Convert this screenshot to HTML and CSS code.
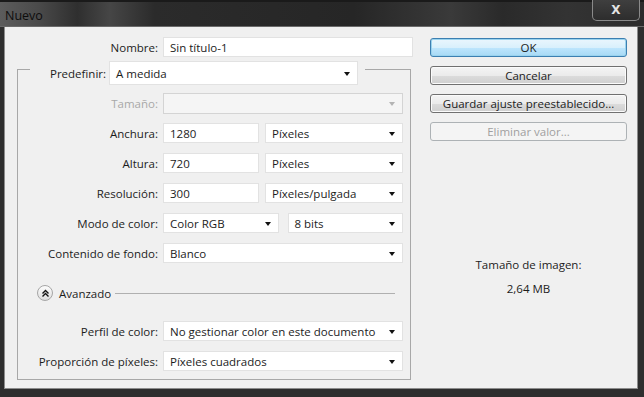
FILE: index.html
```html
<!DOCTYPE html>
<html lang="es">
<head>
  <meta charset="UTF-8" />
  <title>Nuevo</title>
  <link rel="stylesheet" href="styles.css">
</head>
<body>
  <div class="window">
    <div class="titlebar">
      <span class="title">Nuevo</span>
      <span class="close">X</span>
    </div>

    <div class="client">
      <div class="left">
        <div class="row name-row">
          <label>Nombre:</label>
          <div class="field">Sin título-1</div>
        </div>

        <div class="group">
          <div class="group-head">
            <label>Predefinir:</label>
            <div class="select big">A medida</div>
          </div>

          <div class="row">
            <label class="dim">Tamaño:</label>
            <div class="select disabled"></div>
          </div>
          <div class="row">
            <label>Anchura:</label>
            <div class="pair">
              <div class="field num">1280</div>
              <div class="select unit">Píxeles</div>
            </div>
          </div>
          <div class="row">
            <label>Altura:</label>
            <div class="pair">
              <div class="field num">720</div>
              <div class="select unit">Píxeles</div>
            </div>
          </div>
          <div class="row">
            <label>Resolución:</label>
            <div class="pair">
              <div class="field num">300</div>
              <div class="select unit">Píxeles/pulgada</div>
            </div>
          </div>
          <div class="row">
            <label>Modo de color:</label>
            <div class="pair wide">
              <div class="select">Color RGB</div>
              <div class="select">8 bits</div>
            </div>
          </div>
          <div class="row">
            <label>Contenido de fondo:</label>
            <div class="select">Blanco</div>
          </div>

          <!-- Avanzado -->
          <div class="advanced">
            <span class="toggle">
              <svg width="9" height="9" viewBox="0 0 9 9">
                <path d="M1.5 4.5 L4.5 1.5 L7.5 4.5 M1.5 7.5 L4.5 4.5 L7.5 7.5" fill="none" stroke="#111" stroke-width="1.4"/>
              </svg>
            </span>
            <span class="adv-label">Avanzado</span>
            <span class="adv-line"></span>
          </div>

          <div class="row">
            <label>Perfil de color:</label>
            <div class="select">No gestionar color en este documento</div>
          </div>
          <div class="row">
            <label>Proporción de píxeles:</label>
            <div class="select">Píxeles cuadrados</div>
          </div>
        </div>
      </div>

      <div class="right">
        <button class="btn default">OK</button>
        <button class="btn">Cancelar</button>
        <button class="btn">Guardar ajuste preestablecido...</button>
        <button class="btn" disabled>Eliminar valor...</button>

        <div class="info">
          <p>Tamaño de imagen:</p>
          <p>2,64 MB</p>
        </div>
      </div>
    </div>
  </div>
</body>
</html>
```

FILE: styles.css
```css
* {
  margin: 0;
  padding: 0;
  box-sizing: border-box;
}

body {
  width: 644px;
  height: 397px;
  background: #262626;
  font-family: "Open Sans", "Noto Sans", sans-serif;
  font-size: 11.5px;
  color: #1c1c1c;
  overflow: hidden;
}

.window {
  width: 644px;
  height: 397px;
  display: flex;
  flex-direction: column;
  border-top: 2px solid #1a1a1a;
  background: #2e2e2e;
}

/* Barra de titulo */
.titlebar {
  height: 25px;
  display: flex;
  justify-content: space-between;
  align-items: flex-start;
  background: linear-gradient(90deg, #5c5c5c 0%, #4a4a4a 6%, #2f2f2f 12%, #464646 17%, #2b2b2b 24%, #262626 55%, #3a3a3a 70%, #2a2a2a 78%, #333 88%, #2c2c2c 100%);
  border-bottom: 1px solid #6a6a6a;
}

.title {
  padding: 5px 0 0 5px;
  font-size: 12.5px;
  color: #0d0d0d;
}

.close {
  width: 48px;
  height: 21px;
  margin: -2px 4px 0 0;
  display: flex;
  justify-content: center;
  align-items: center;
  background: linear-gradient(#3f3f3f, #2d2d2d);
  border: 1px solid #8a8a8a;
  border-top: none;
  border-radius: 0 0 5px 5px;
  color: #e4e4e4;
  font-family: "DejaVu Sans", sans-serif;
  font-weight: bold;
  font-size: 12px;
}

/* Area cliente */
.client {
  flex: 1;
  margin: 0 6px 8px 4px;
  background: #f0f0f0;
  border-left: 1px solid #8c8c8c;
  border-right: 1px solid #8c8c8c;
  border-bottom: 1px solid #8c8c8c;
  display: flex;
  padding-top: 10px;
}

.left {
  width: 409px;
}

.right {
  width: 197px;
  margin-left: 16px;
  display: flex;
  flex-direction: column;
  gap: 9px;
  padding-top: 1px;
}

/* Filas */
.row {
  display: grid;
  grid-template-columns: 140px 240px;
  column-gap: 5px;
  align-items: center;
  height: 20px;
  margin-top: 10px;
}

.row label {
  text-align: right;
  white-space: nowrap;
}

.row label.dim {
  color: #a8a8a8;
}

.name-row {
  grid-template-columns: 153px 250px;
  margin-top: 0;
}

.field, .select {
  height: 20px;
  background: #fff;
  border: 1px solid #e2e2e2;
  display: flex;
  align-items: center;
  padding-left: 6px;
  white-space: nowrap;
}

.select {
  padding-right: 7px;
}

.select::after {
  content: "";
  margin-left: auto;
  margin-top: 1px;
  border-top: 4px solid #111;
  border-left: 3.5px solid transparent;
  border-right: 3.5px solid transparent;
}

.select.disabled {
  height: 21px;
  background: #f5f5f5;
  border-color: #d4d4d4;
}

.select.disabled::after {
  border-top-color: #b4b4b4;
}

.select.big {
  height: 24px;
  width: 249px;
}

.pair {
  display: flex;
  gap: 6px;
}

.pair .num {
  width: 96px;
}

.pair .unit {
  flex: 1;
}

.pair.wide {
  gap: 9px;
}

.pair.wide .select {
  flex: 1;
}

/* Grupo */
.group {
  margin: 12px 0 0 12px;
  width: 394px;
  height: 311px;
  border: 1px solid #a8a8a8;
}

.group-head {
  display: flex;
  align-items: center;
  gap: 3px;
  margin: -9px 0 0 12px;
  padding: 0 7px 0 20px;
  width: 335px;
  background: #f0f0f0;
}

.group-head + .row {
  margin-top: 8px;
}

.advanced {
  display: flex;
  align-items: center;
  height: 20px;
  margin: 20px 15px 18px 19px;
}

.toggle {
  width: 16px;
  height: 16px;
  border-radius: 50%;
  border: 1px solid #a6a6a6;
  background: linear-gradient(#fdfdfd, #dedede);
  display: flex;
  justify-content: center;
  align-items: center;
}

.adv-label {
  margin-left: 6px;
}

.adv-line {
  flex: 1;
  height: 1px;
  margin-left: 4px;
  background: #b0b0b0;
}

/* Botones */
.btn {
  height: 19px;
  width: 197px;
  font-family: inherit;
  font-size: 11.5px;
  color: #1c1c1c;
  border: 1px solid #707070;
  border-radius: 3px;
  background: linear-gradient(#f4f4f4 0%, #ebebeb 50%, #dcdcdc 51%, #cfcfcf 100%);
  box-shadow: inset 0 0 0 1px #fbfbfb;
}

.btn.default {
  border-color: #3c7fb1;
  box-shadow: inset 0 0 0 1px #9ad3ee;
  background: linear-gradient(#eaf6fd 0%, #d9f0fc 50%, #bee6fd 51%, #a7d9f5 100%);
}

.btn:disabled {
  border-color: #adb2b5;
  background: #f4f4f4;
  box-shadow: none;
  color: #a0a0a0;
}

.info {
  margin-top: 107px;
  text-align: center;
  line-height: 15px;
}

.info p + p {
  margin-top: 9px;
}
```
